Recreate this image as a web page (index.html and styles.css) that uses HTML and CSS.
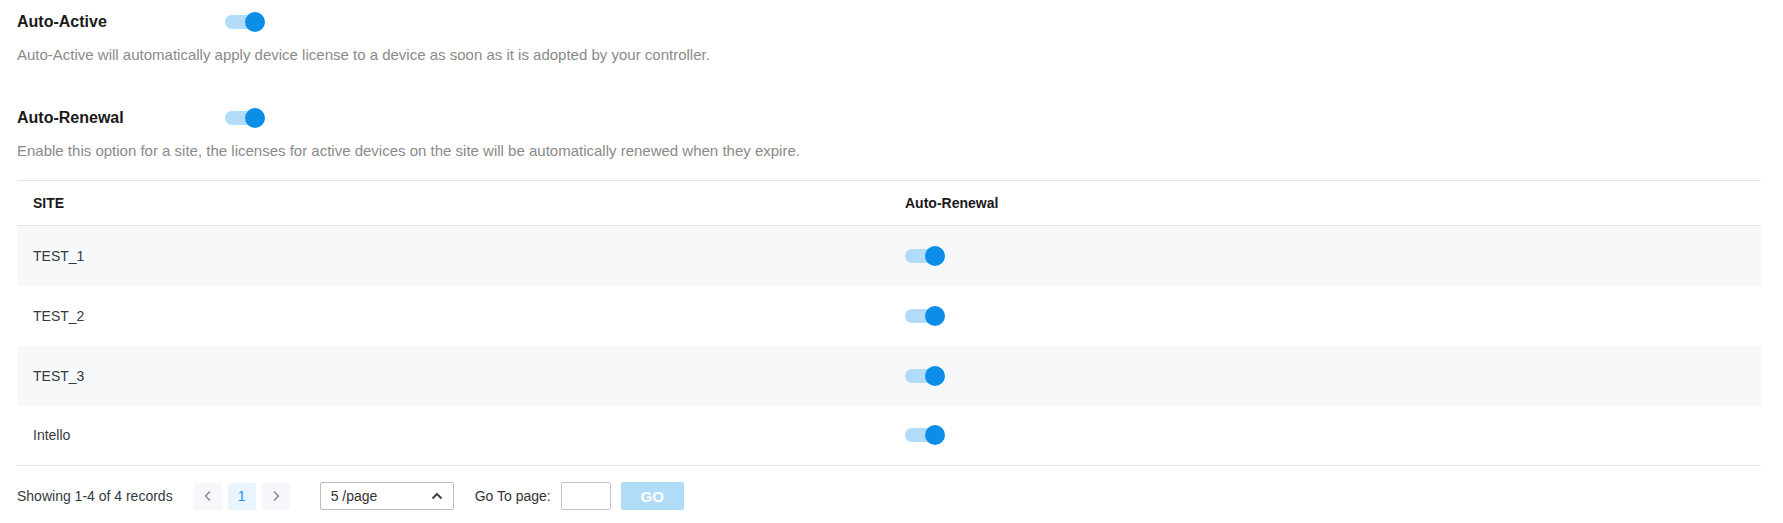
FILE: index.html
```html
<!DOCTYPE html>
<html>
<head>
<meta charset="utf-8">
<link rel="stylesheet" href="styles.css">
</head>
<body>
<div class="page">
  <section class="setting">
    <div class="setting-head">
      <span class="setting-title">Auto-Active</span>
      <span class="toggle on"><span class="knob"></span></span>
    </div>
    <p class="setting-desc">Auto-Active will automatically apply device license to a device as soon as it is adopted by your controller.</p>
  </section>
  <section class="setting second">
    <div class="setting-head">
      <span class="setting-title">Auto-Renewal</span>
      <span class="toggle on"><span class="knob"></span></span>
    </div>
    <p class="setting-desc">Enable this option for a site, the licenses for active devices on the site will be automatically renewed when they expire.</p>
  </section>

  <table class="sites">
    <thead>
      <tr><th>SITE</th><th>Auto-Renewal</th></tr>
    </thead>
    <tbody>
      <tr class="stripe"><td>TEST_1</td><td><span class="toggle on"><span class="knob"></span></span></td></tr>
      <tr><td>TEST_2</td><td><span class="toggle on"><span class="knob"></span></span></td></tr>
      <tr class="stripe"><td>TEST_3</td><td><span class="toggle on"><span class="knob"></span></span></td></tr>
      <tr><td>Intello</td><td><span class="toggle on"><span class="knob"></span></span></td></tr>
    </tbody>
  </table>

  <div class="pager">
    <span class="showing">Showing 1-4 of 4 records</span>
    <div class="pages">
      <span class="pbtn arrow"><svg width="10" height="12" viewBox="0 0 10 12"><path d="M7 1.5 L2.5 6 L7 10.5" fill="none" stroke="#888" stroke-width="1.4"/></svg></span>
      <span class="pbtn active">1</span>
      <span class="pbtn arrow"><svg width="10" height="12" viewBox="0 0 10 12"><path d="M3 1.5 L7.5 6 L3 10.5" fill="none" stroke="#888" stroke-width="1.4"/></svg></span>
    </div>
    <div class="select">
      <span>5 /page</span>
      <svg width="12" height="8" viewBox="0 0 12 8"><path d="M1.5 6.5 L6 2 L10.5 6.5" fill="none" stroke="#444" stroke-width="2"/></svg>
    </div>
    <span class="goto">Go To page:</span>
    <span class="goinput"></span>
    <span class="gobtn">GO</span>
  </div>
</div>
</body>
</html>
```

FILE: styles.css
```css
* { box-sizing: border-box; }
html, body { margin: 0; padding: 0; background: #fff; }
body {
  font-family: "Liberation Sans", Arial, sans-serif;
  font-size: 14px;
  color: #333;
}
.page {
  padding: 12px 22px 0 17px;
}
.setting-head {
  display: flex;
  align-items: center;
  height: 20px;
}
.setting-title {
  width: 208px;
  font-size: 16px;
  font-weight: bold;
  color: #1a1a1a;
}
.setting-desc {
  margin: 12px 0 0 0;
  line-height: 22px;
  color: #8a8a8a;
  font-size: 15px;
}
.setting.second {
  margin-top: 42px;
}
.toggle {
  position: relative;
  display: inline-block;
  width: 40px;
  height: 20px;
  vertical-align: middle;
}
.toggle::before {
  content: "";
  position: absolute;
  left: 0;
  top: 3px;
  width: 36px;
  height: 14px;
  border-radius: 7px;
  background: #b1dbf7;
}
.toggle .knob {
  position: absolute;
  right: 0;
  top: 0;
  width: 20px;
  height: 20px;
  border-radius: 50%;
  background: #0b8de8;
}
.sites {
  width: 100%;
  margin-top: 18px;
  border-collapse: collapse;
  table-layout: fixed;
}
.sites th, .sites td {
  text-align: left;
  padding: 0 16px;
}
.sites thead tr {
  border-top: 1px solid #e4e4e4;
  border-bottom: 1px solid #e4e4e4;
}
.sites th {
  height: 45px;
  font-size: 14px;
  font-weight: bold;
  color: #1a1a1a;
}
.sites td {
  height: 60px;
  font-size: 14px;
  color: #333a44;
}
.sites tbody tr:last-child {
  border-bottom: 1px solid #e4e4e4;
}
.sites tr.stripe td {
  background: #f7f8fa;
}
.pager {
  display: flex;
  align-items: center;
  margin-top: 16px;
  height: 28px;
}
.showing {
  color: #333a44;
  margin-right: 21px;
}
.pages {
  display: flex;
  gap: 6px;
}
.pbtn {
  display: flex;
  align-items: center;
  justify-content: center;
  width: 28px;
  height: 27px;
  border-radius: 3px;
  background: #f5f7fa;
}
.pbtn.active {
  background: #e8f4fe;
  color: #2492ef;
}
.select {
  margin-left: 30px;
  width: 134px;
  height: 28px;
  border: 1px solid #bcbcbc;
  border-radius: 2px;
  display: flex;
  align-items: center;
  justify-content: space-between;
  padding: 0 10px 0 10px;
  color: #333;
}
.goto {
  margin-left: 21px;
  color: #333;
}
.goinput {
  margin-left: 10px;
  width: 50px;
  height: 28px;
  border: 1px solid #c4c4c4;
  border-radius: 2px;
}
.gobtn {
  margin-left: 10px;
  width: 63px;
  height: 28px;
  border-radius: 2px;
  background: #b1dcf8;
  color: #fff;
  font-weight: bold;
  font-size: 15px;
  display: flex;
  align-items: center;
  justify-content: center;
}
```
